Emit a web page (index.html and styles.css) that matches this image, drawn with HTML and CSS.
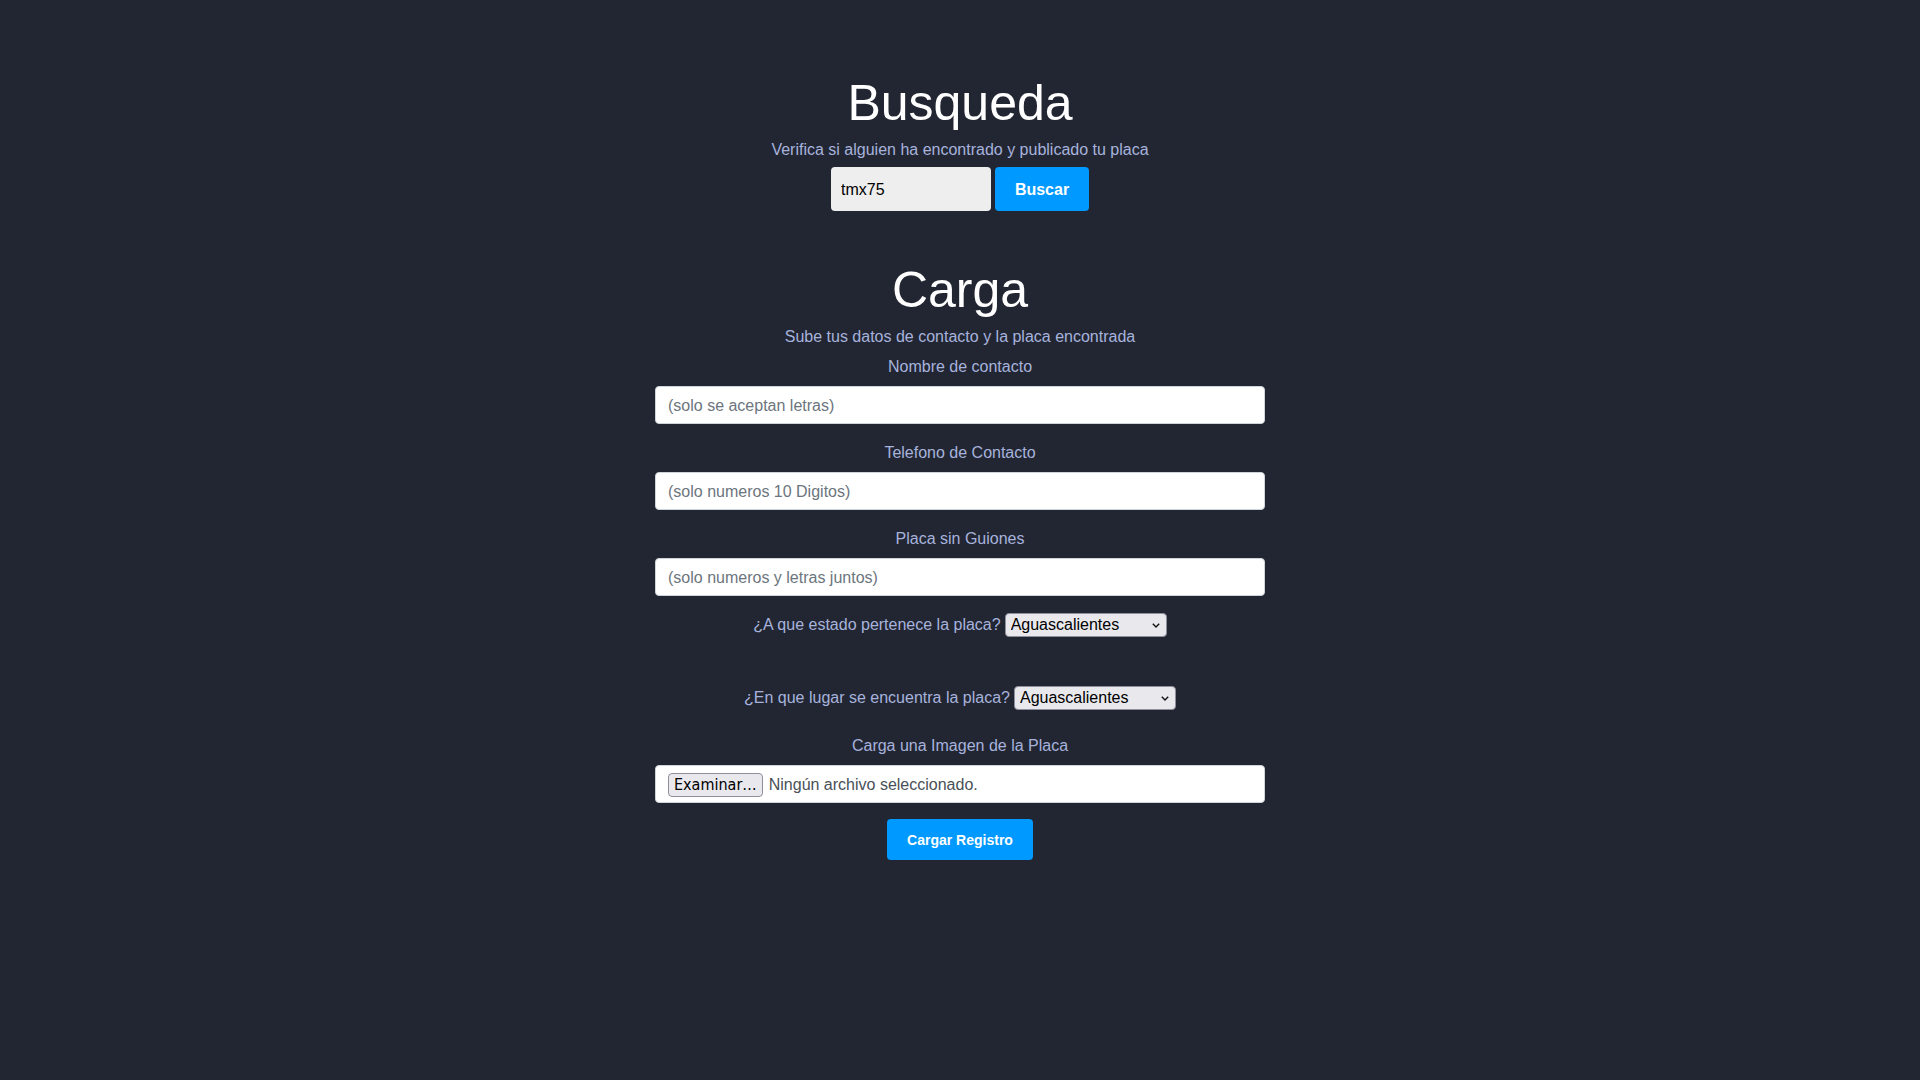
FILE: index.html
```html
<!DOCTYPE html>
<html lang="es">
<head>
<meta charset="utf-8">
<title>Busqueda y Carga de Placas</title>
<link rel="stylesheet" href="styles.css">
</head>
<body>
<main class="page">
  <section class="search">
    <h1 class="title">Busqueda</h1>
    <p class="subtitle subtitle-search">Verifica si alguien ha encontrado y publicado tu placa</p>
    <form class="search-form">
      <input class="search-input" type="text" value="tmx75">
      <button class="btn btn-search" type="button">Buscar</button>
    </form>
  </section>

  <section class="upload">
    <h1 class="title">Carga</h1>
    <p class="subtitle subtitle-upload">Sube tus datos de contacto y la placa encontrada</p>
    <form class="upload-form">
      <div class="field">
        <label class="field-label">Nombre de contacto</label>
        <input class="field-input" type="text" placeholder="(solo se aceptan letras)">
      </div>
      <div class="field">
        <label class="field-label">Telefono de Contacto</label>
        <input class="field-input" type="text" placeholder="(solo numeros 10 Digitos)">
      </div>
      <div class="field">
        <label class="field-label">Placa sin Guiones</label>
        <input class="field-input" type="text" placeholder="(solo numeros y letras juntos)">
      </div>

      <div class="select-row select-row-first">
        <span class="select-label">¿A que estado pertenece la placa?</span>
        <span class="select-wrap">
          <select class="select"><option>Aguascalientes</option></select>
          <svg class="chevron" width="8" height="5" viewBox="0 0 8 5"><polyline points="0.8,0.8 4,4 7.2,0.8" fill="none" stroke="#111" stroke-width="1.4"/></svg>
        </span>
      </div>
      <div class="select-row">
        <span class="select-label">¿En que lugar se encuentra la placa?</span>
        <span class="select-wrap">
          <select class="select"><option>Aguascalientes</option></select>
          <svg class="chevron" width="8" height="5" viewBox="0 0 8 5"><polyline points="0.8,0.8 4,4 7.2,0.8" fill="none" stroke="#111" stroke-width="1.4"/></svg>
        </span>
      </div>

      <div class="file-field">
        <label class="field-label">Carga una Imagen de la Placa</label>
        <div class="file-box">
          <span class="file-btn">Examinar…</span>
          <span class="file-name">Ningún archivo seleccionado.</span>
        </div>
      </div>

      <button class="btn btn-submit" type="button">Cargar Registro</button>
    </form>
  </section>
</main>
</body>
</html>
```

FILE: styles.css
```css
* {
  box-sizing: border-box;
}

html, body {
  margin: 0;
  min-height: 100%;
}

body {
  background: #222632;
  font-family: "Liberation Sans", Arial, sans-serif;
  font-size: 16px;
  line-height: 1.5;
  color: #a7b3dd;
  text-align: center;
  min-height: 100vh;
}

.page {
  padding-top: 73px;
}

.title {
  margin: 0;
  font-size: 50px;
  font-weight: 400;
  line-height: 60px;
  color: #ffffff;
}

.subtitle {
  margin: 0;
  line-height: 24px;
}

.subtitle-search {
  margin-top: 5px;
}

.search-form {
  margin-top: 5px;
  display: flex;
  justify-content: center;
  gap: 4px;
}

.search-input {
  width: 160px;
  height: 44px;
  border: 0;
  border-radius: 4px;
  background: #eeeeee;
  padding: 2px 10px 0;
  font-family: "Liberation Sans", Arial, sans-serif;
  font-size: 16px;
  color: #000;
  outline: none;
}

.btn {
  border: 0;
  border-radius: 4px;
  background: #0099ff;
  color: #fff;
  font-family: "Liberation Sans", Arial, sans-serif;
  font-weight: 700;
  cursor: pointer;
}

.btn-search {
  width: 94px;
  height: 44px;
  font-size: 16px;
  padding: 2px 0 0;
}

.upload {
  margin-top: 49px;
}

.subtitle-upload {
  margin-top: 5px;
}

.upload-form {
  width: 610px;
  margin: 6px auto 0;
}

.field {
  margin-bottom: 17px;
}

.field-label {
  display: block;
  margin-bottom: 7px;
  line-height: 24px;
}

.field-input {
  display: block;
  width: 100%;
  height: 38px;
  padding: 7px 12px 5px;
  border: 1px solid #ced4da;
  border-radius: 4px;
  background: #fff;
  font-family: "Liberation Sans", Arial, sans-serif;
  font-size: 16px;
  color: #495057;
  outline: none;
}

.field-input::placeholder {
  color: #6c757d;
  opacity: 1;
}

.select-row {
  display: flex;
  justify-content: center;
  align-items: center;
  gap: 4px;
  height: 24px;
}

.select-row-first {
  margin-bottom: 49px;
}

.select-wrap {
  position: relative;
  display: inline-block;
  width: 162px;
  height: 24px;
}

.select {
  appearance: none;
  -webkit-appearance: none;
  width: 162px;
  height: 24px;
  margin: 0;
  padding: 0 20px 0 5px;
  border: 1px solid #8f8f9d;
  border-radius: 4px;
  background: #e9e9ed;
  font-family: "Liberation Sans", Arial, sans-serif;
  font-size: 16px;
  line-height: 22px;
  color: #000;
  outline: none;
}

.chevron {
  position: absolute;
  right: 7px;
  top: 10px;
  pointer-events: none;
}

.file-field {
  margin-top: 24px;
}

.file-box {
  display: flex;
  align-items: center;
  gap: 6px;
  height: 38px;
  padding: 2px 12px 0;
  border: 1px solid #ced4da;
  border-radius: 4px;
  background: #fff;
  text-align: left;
}

.file-btn {
  display: inline-block;
  height: 24px;
  padding: 0 5px;
  border: 1px solid #8f8f9d;
  border-radius: 4px;
  background: #e9e9ed;
  font-family: "DejaVu Sans Condensed", "DejaVu Sans", sans-serif;
  font-size: 16px;
  line-height: 22px;
  color: #000;
}

.file-name {
  color: #495057;
  line-height: 24px;
}

.btn-submit {
  margin-top: 16px;
  height: 41px;
  padding: 1px 20px 0;
  font-size: 14px;
}
```
